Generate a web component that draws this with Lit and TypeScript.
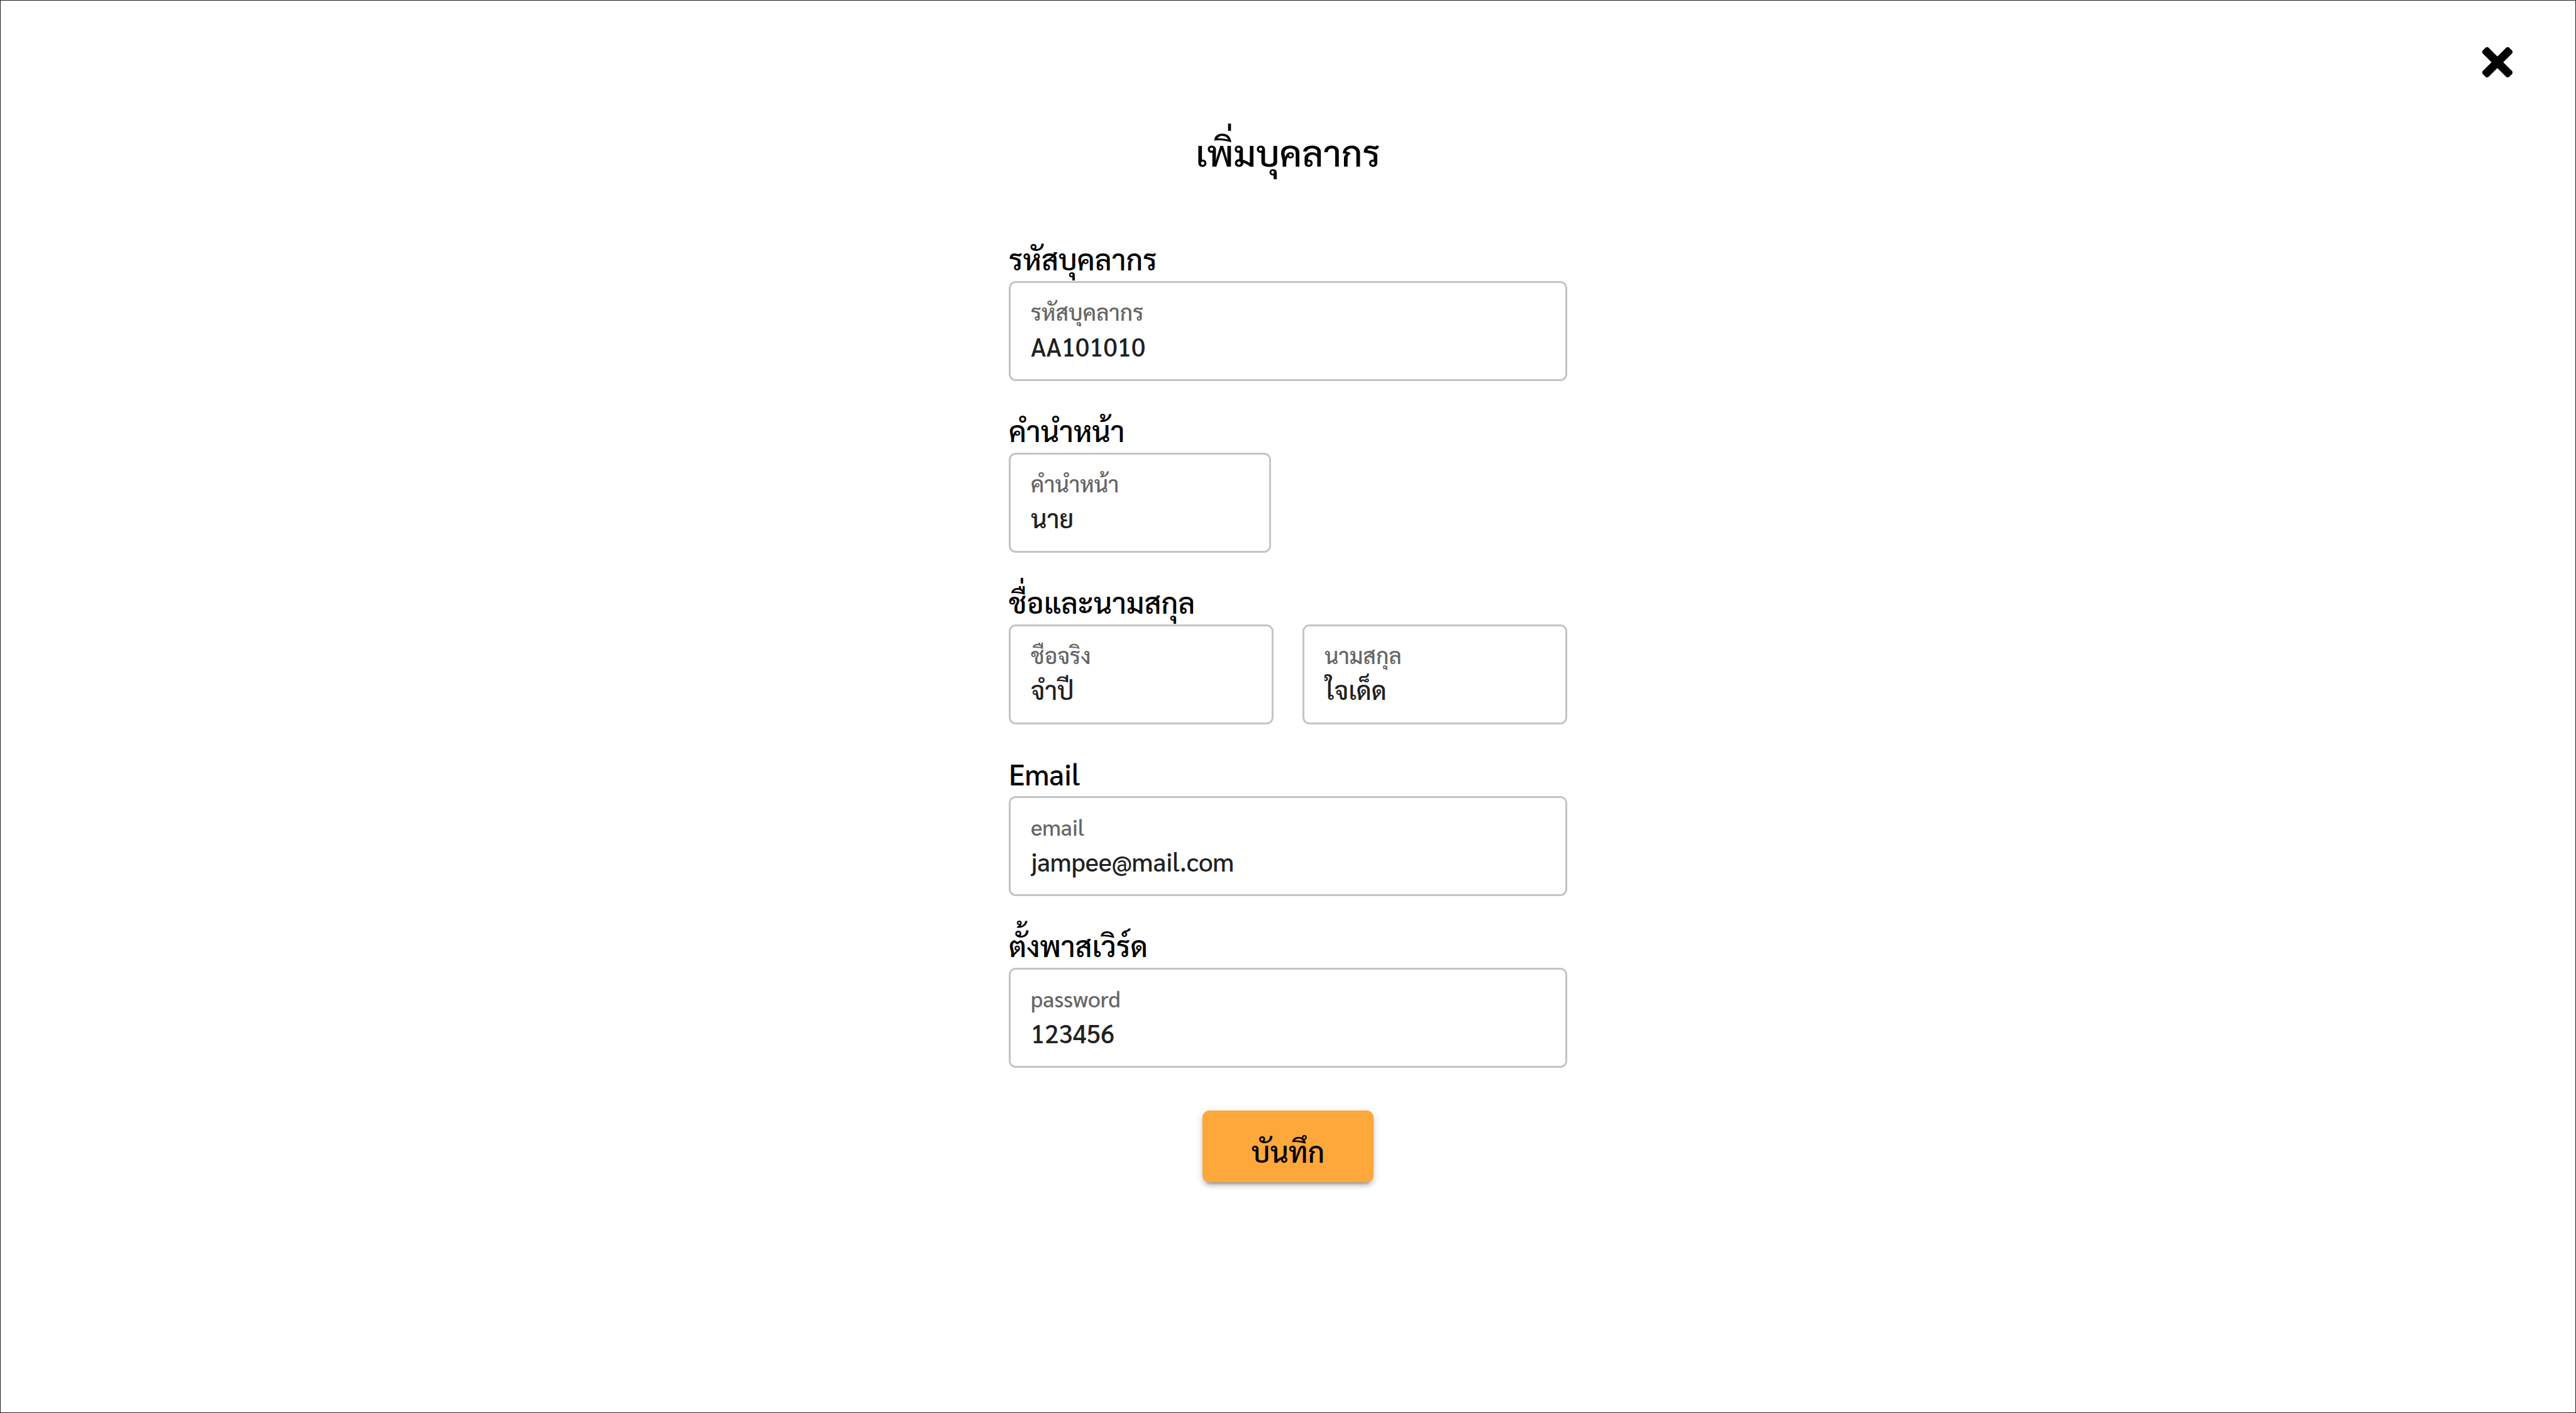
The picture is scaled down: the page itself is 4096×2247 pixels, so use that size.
import { LitElement, html, css, nothing } from "lit";
import { customElement, property, state } from "lit/decorators.js";

@customElement("text-field")
class TextField extends LitElement {
  @property() heading = "";
  @property() label = "";
  @property() name = "";
  @property() type = "text";
  @property() value = "";

  static styles = css`
    :host {
      display: block;
    }
    .heading {
      display: block;
      margin-bottom: 6px;
      font-size: 46px;
      line-height: 60px;
      color: #000;
    }
    .box {
      display: flex;
      flex-direction: column;
      gap: 2px;
      padding: 23px 32px 24px;
      border: 3px solid #c4c4c4;
      border-radius: 11px;
    }
    .box:focus-within {
      border-color: #757575;
    }
    .label {
      font-size: 35px;
      line-height: 46px;
      color: #666;
      white-space: nowrap;
      clip-path: inset(3px 0 0);
    }
    .input {
      display: block;
      width: 100%;
      height: 58px;
      margin: 0;
      padding: 0;
      border: 0;
      outline: 0;
      background: none;
      font: inherit;
      font-size: 40px;
      line-height: 58px;
      color: #212121;
    }
  `;

  private onInput(e: Event) {
    this.value = (e.target as HTMLInputElement).value;
  }

  render() {
    return html`
      ${this.heading
        ? html`<label class="heading" for="control">${this.heading}</label>`
        : nothing}
      <div class="box">
        <label class="label" for="control">${this.label}</label>
        <input
          class="input"
          id="control"
          name=${this.name}
          type=${this.type}
          .value=${this.value}
          autocomplete="off"
          spellcheck="false"
          @input=${this.onInput}
        />
      </div>
    `;
  }
}

@customElement("app-root")
class AppRoot extends LitElement {
  @state() private person = {
    code: "AA101010",
    prefix: "นาย",
    firstName: "จำปี",
    lastName: "ใจเด็ด",
    email: "jampee@mail.com",
    password: "123456",
  };

  static styles = css`
    :host {
      display: flex;
      flex-direction: column;
      box-sizing: border-box;
      min-height: 100vh;
      border: 1px solid #222;
      background: #fff;
      font-family: Sarabun, "Noto Sans Thai Looped", "Noto Sans", sans-serif;
      font-weight: 500;
      color: #000;
    }
    .bar {
      display: flex;
      justify-content: flex-end;
      padding: 74px 100px 0;
    }
    .close {
      display: block;
      padding: 0;
      border: 0;
      background: none;
      cursor: pointer;
    }
    .icon {
      display: block;
      width: 48px;
      height: 48px;
    }
    .content {
      display: flex;
      flex-direction: column;
      align-items: center;
      padding: 81px 40px;
    }
    .title {
      margin: 0 0 103px;
      font-size: 58px;
      font-weight: 500;
      line-height: 74px;
    }
    .form {
      display: flex;
      flex-direction: column;
      gap: 48px;
      width: 100%;
      max-width: 888px;
    }
    .short {
      width: 47%;
    }
    .group {
      min-width: 0;
      margin: 0;
      padding: 0;
      border: 0;
    }
    .legend {
      display: block;
      margin-bottom: 6px;
      padding: 0;
      font-size: 46px;
      line-height: 60px;
    }
    .pair {
      display: grid;
      grid-template-columns: 1fr 1fr;
      gap: 46px;
    }
    .save {
      align-self: center;
      margin-top: 20px;
      padding: 34px 78px 20px;
      border: 0;
      border-radius: 11px;
      background: #fea73b;
      box-shadow:
        0 9px 3px -6px rgba(0, 0, 0, 0.2),
        0 6px 6px 0 rgba(0, 0, 0, 0.14),
        0 3px 14px 0 rgba(0, 0, 0, 0.12);
      font: inherit;
      font-size: 46px;
      line-height: 60px;
      color: #000;
      cursor: pointer;
    }
  `;

  private onSubmit(e: Event) {
    e.preventDefault();
  }

  render() {
    const p = this.person;
    return html`
      <header class="bar">
        <button class="close" type="button" aria-label="ปิด">
          <svg class="icon" viewBox="-110 -110 220 220" aria-hidden="true">
            <rect x="-136" y="-30" width="272" height="60" rx="18" transform="rotate(45)" />
            <rect x="-136" y="-30" width="272" height="60" rx="18" transform="rotate(-45)" />
          </svg>
        </button>
      </header>
      <main class="content">
        <h1 class="title">เพิ่มบุคลากร</h1>
        <form class="form" @submit=${this.onSubmit}>
          <text-field heading="รหัสบุคลากร" label="รหัสบุคลากร" name="code" .value=${p.code}></text-field>
          <text-field class="short" heading="คำนำหน้า" label="คำนำหน้า" name="prefix" .value=${p.prefix}></text-field>
          <fieldset class="group">
            <legend class="legend">ชื่อและนามสกุล</legend>
            <div class="pair">
              <text-field label="ชื่อจริง" name="firstName" .value=${p.firstName}></text-field>
              <text-field label="นามสกุล" name="lastName" .value=${p.lastName}></text-field>
            </div>
          </fieldset>
          <text-field heading="Email" label="email" name="email" type="email" .value=${p.email}></text-field>
          <text-field heading="ตั้งพาสเวิร์ด" label="password" name="password" .value=${p.password}></text-field>
          <button class="save" type="submit">บันทึก</button>
        </form>
      </main>
    `;
  }
}
